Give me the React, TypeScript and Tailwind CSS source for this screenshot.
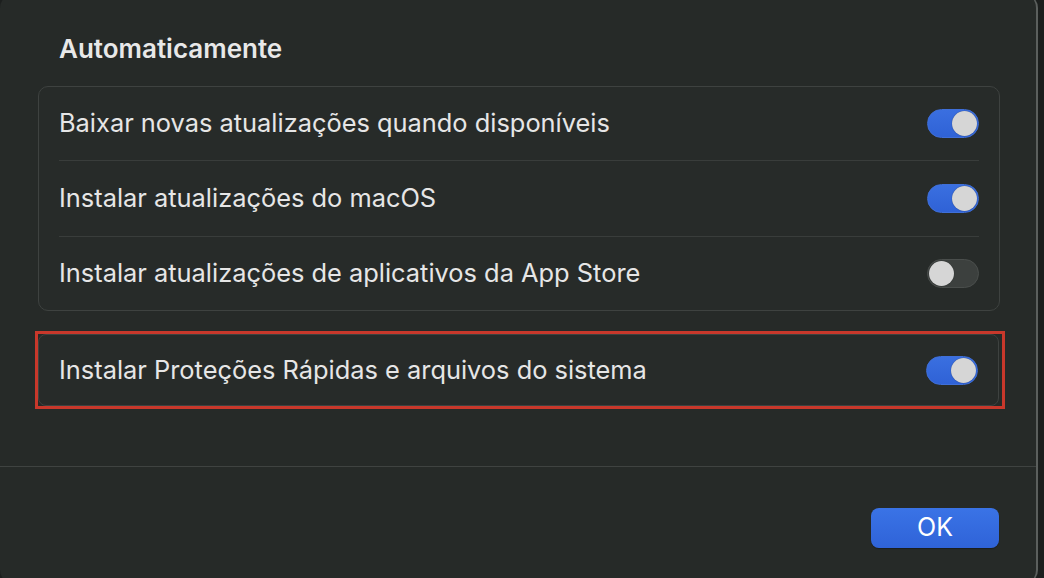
import React from "react";

type ToggleProps = { on: boolean };

function Toggle({ on }: ToggleProps) {
  return (
    <div
      className={
        "relative h-[29px] w-[52px] shrink-0 rounded-full border " +
        (on
          ? "border-[#3f6fd8] bg-[linear-gradient(#3a6fe0,#2f62d6)]"
          : "border-[#4a4e4c] bg-[#3c403e]")
      }
    >
      <div
        className={
          "absolute top-[1px] h-[25px] w-[25px] rounded-full bg-[#d6d6d6] shadow-[0_0_1px_rgba(0,0,0,0.5)] " +
          (on ? "right-[1px]" : "left-[1px]")
        }
      />
    </div>
  );
}

type RowProps = { label: string; on: boolean; height: string; divider?: boolean };

function Row({ label, on, height, divider }: RowProps) {
  return (
    <div className="px-[20px]">
      <div
        className={
          "flex items-center justify-between " +
          height +
          (divider ? " border-b border-[#393d3b]" : "")
        }
      >
        <span className="text-[25.4px] text-[#e6e6e6]">{label}</span>
        <Toggle on={on} />
      </div>
    </div>
  );
}

export default function App() {
  return (
    <div
      className="flex h-[578px] w-[1044px] overflow-hidden bg-[#1c1f1e]"
      style={{ fontFamily: "Inter, 'Noto Sans', sans-serif" }}
    >
      <div className="-mt-[6px] flex h-[590px] w-[1038px] shrink-0 flex-col rounded-[14px] border-r-2 border-[#5b5f5d] bg-[#262a28]">
        <div className="px-[38px] pt-[40px]">
          <h2 className="pl-[21px] text-[26px] font-semibold leading-[30px] text-[#e8e8e8]">
            Automaticamente
          </h2>
          <div className="mt-[22px] w-[962px] rounded-[10px] border border-[#3e4240] bg-[#272b29]">
            <Row label="Baixar novas atualizações quando disponíveis" on height="h-[74px]" divider />
            <Row label="Instalar atualizações do macOS" on height="h-[76px]" divider />
            <Row label="Instalar atualizações de aplicativos da App Store" on={false} height="h-[73px]" />
          </div>
          <div className="-ml-[3px] mt-[20px] w-[970px] border-[3px] border-[#c8382b] pr-[3px]">
            <div className="flex h-[72px] items-center justify-between rounded-[8px] border border-[#3e4240] bg-[#272b29] px-[20px]">
              <span className="text-[25.4px] text-[#e6e6e6]">
                Instalar Proteções Rápidas e arquivos do sistema
              </span>
              <Toggle on />
            </div>
          </div>
        </div>
        <div className="mt-[57px] border-t border-[#3f4341]" />
        <div className="flex justify-end pr-[37px] pt-[41px]">
          <button className="flex h-[40px] w-[128px] items-center justify-center rounded-[8px] bg-[linear-gradient(#3a73e6,#2f63d8)] text-[25px] text-white shadow-[0_1px_1px_rgba(0,0,0,0.3)]">
            OK
          </button>
        </div>
      </div>
    </div>
  );
}
